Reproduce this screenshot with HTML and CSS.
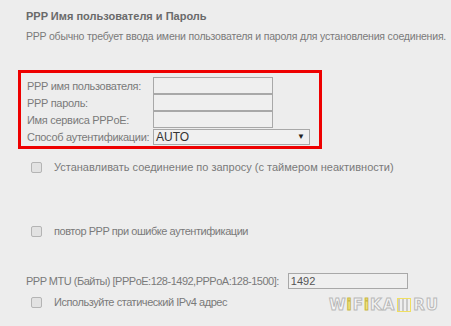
FILE: index.html
```html
<!DOCTYPE html>
<html lang="ru">
  <head>
    <meta charset="UTF-8" />
    <meta name="viewport" content="width=device-width, initial-scale=1.0" />
    <title>PPP</title>
    <link rel="stylesheet" href="styles.css">
  </head>
  <body>
    <div class="page">
      <h3 class="title">PPP Имя пользователя и Пароль</h3>
      <p class="desc">PPP обычно требует ввода имени пользователя и пароля для установления соединения.</p>

      <div class="auth-box">
        <div class="auth-grid">
          <label>PPP имя пользователя:</label>
          <span class="field"></span>
          <label>PPP пароль:</label>
          <span class="field"></span>
          <label>Имя сервиса PPPoE:</label>
          <span class="field"></span>
          <label>Способ аутентификации:</label>
          <span class="select">AUTO<span class="arrow">▼</span></span>
        </div>
      </div>

      <div class="check-row first">
        <span class="check"></span>
        <span>Устанавливать соединение по запросу (с таймером неактивности)</span>
      </div>

      <div class="check-row second tight">
        <span class="check"></span>
        <span>повтор PPP при ошибке аутентификации</span>
      </div>

      <div class="mtu-row">
        <span class="mtu-label">PPP MTU (Байты) [PPPoE:128-1492,PPPoA:128-1500]:</span>
        <span class="field mtu">1492</span>
      </div>

      <div class="check-row third tight">
        <span class="check"></span>
        <span>Используйте статический IPv4 адрес</span>
      </div>

      <div class="watermark">
        W<span class="yi">i</span>F<span class="yi">i</span>KA<span class="qr"></span>RU
      </div>
    </div>
  </body>
</html>
```

FILE: styles.css
```css
body {
  margin: 0;
  background-color: #ededed;
  font-family: "Liberation Sans", Arial, sans-serif;
  font-size: 11px;
  color: #7a7a7a;
}
.page {
  position: relative;
  height: 326px;
  padding: 8px 0 0 26px;
  box-sizing: border-box;
  overflow: hidden;
  white-space: nowrap;
}
.title {
  margin: 0;
  font-size: 11px;
  line-height: 16px;
  font-weight: bold;
  color: #6a6a6a;
}
.desc {
  margin: 4px 0 0 0;
  line-height: 16px;
  font-size: 10.5px;
  letter-spacing: -0.2px;
}
.auth-box {
  margin: 26px 0 0 -8px;
  width: 292px;
  height: 69px;
  border: 3px solid #ee0000;
  padding: 4px 0 0 6px;
}
.auth-grid {
  display: grid;
  grid-template-columns: 126px auto;
  grid-auto-rows: 17px;
  align-items: center;
}
.auth-grid label {
  letter-spacing: -0.3px;
}
.field {
  display: block;
  width: 116px;
  height: 15px;
  border: 1px solid #a8a8a8;
  background: #efefef;
  color: #555;
  line-height: 15px;
  padding-left: 2px;
}
.select {
  display: flex;
  justify-content: space-between;
  align-items: center;
  width: 149px;
  height: 14px;
  border: 1px solid #a8a8a8;
  background: #f0f0f0;
  padding: 0 4px 0 2px;
  font-size: 12px;
  color: #333;
}
.arrow {
  font-size: 8px;
  color: #222;
}
.check-row {
  display: flex;
  align-items: center;
  height: 16px;
  padding-left: 5px;
  gap: 12px;
}
.check-row.tight {
  letter-spacing: -0.45px;
}
.check {
  width: 9px;
  height: 9px;
  border: 1px solid #b4b4b4;
  border-radius: 2px;
  background: #e2e2e2;
}
.check-row.first {
  margin-top: 10px;
}
.check-row.second {
  margin-top: 48px;
}
.check-row.third {
  margin-top: 5px;
}
.mtu-row {
  display: flex;
  align-items: center;
  gap: 9px;
  margin-top: 34px;
  height: 16px;
}
.mtu-label {
  letter-spacing: -0.5px;
}
.mtu {
  width: 116px;
  height: 14px;
  line-height: 14px;
}
/* watermark overlay */
.watermark {
  position: absolute;
  right: 12px;
  bottom: 12px;
  display: flex;
  align-items: center;
  font-family: "DejaVu Sans", sans-serif;
  font-weight: bold;
  font-size: 15px;
  letter-spacing: 1px;
  color: #f6f6f6;
  -webkit-text-stroke: 1px #b9b9b9;
}
.yi {
  color: #f3e57a;
  -webkit-text-stroke: 1px #c9b94a;
}
.qr {
  display: inline-block;
  width: 12px;
  height: 12px;
  margin: 0 2px;
  border: 1px solid #f0df60;
  background: repeating-linear-gradient(90deg, #c8c8c8 0 2px, #eee 2px 4px);
}
```
